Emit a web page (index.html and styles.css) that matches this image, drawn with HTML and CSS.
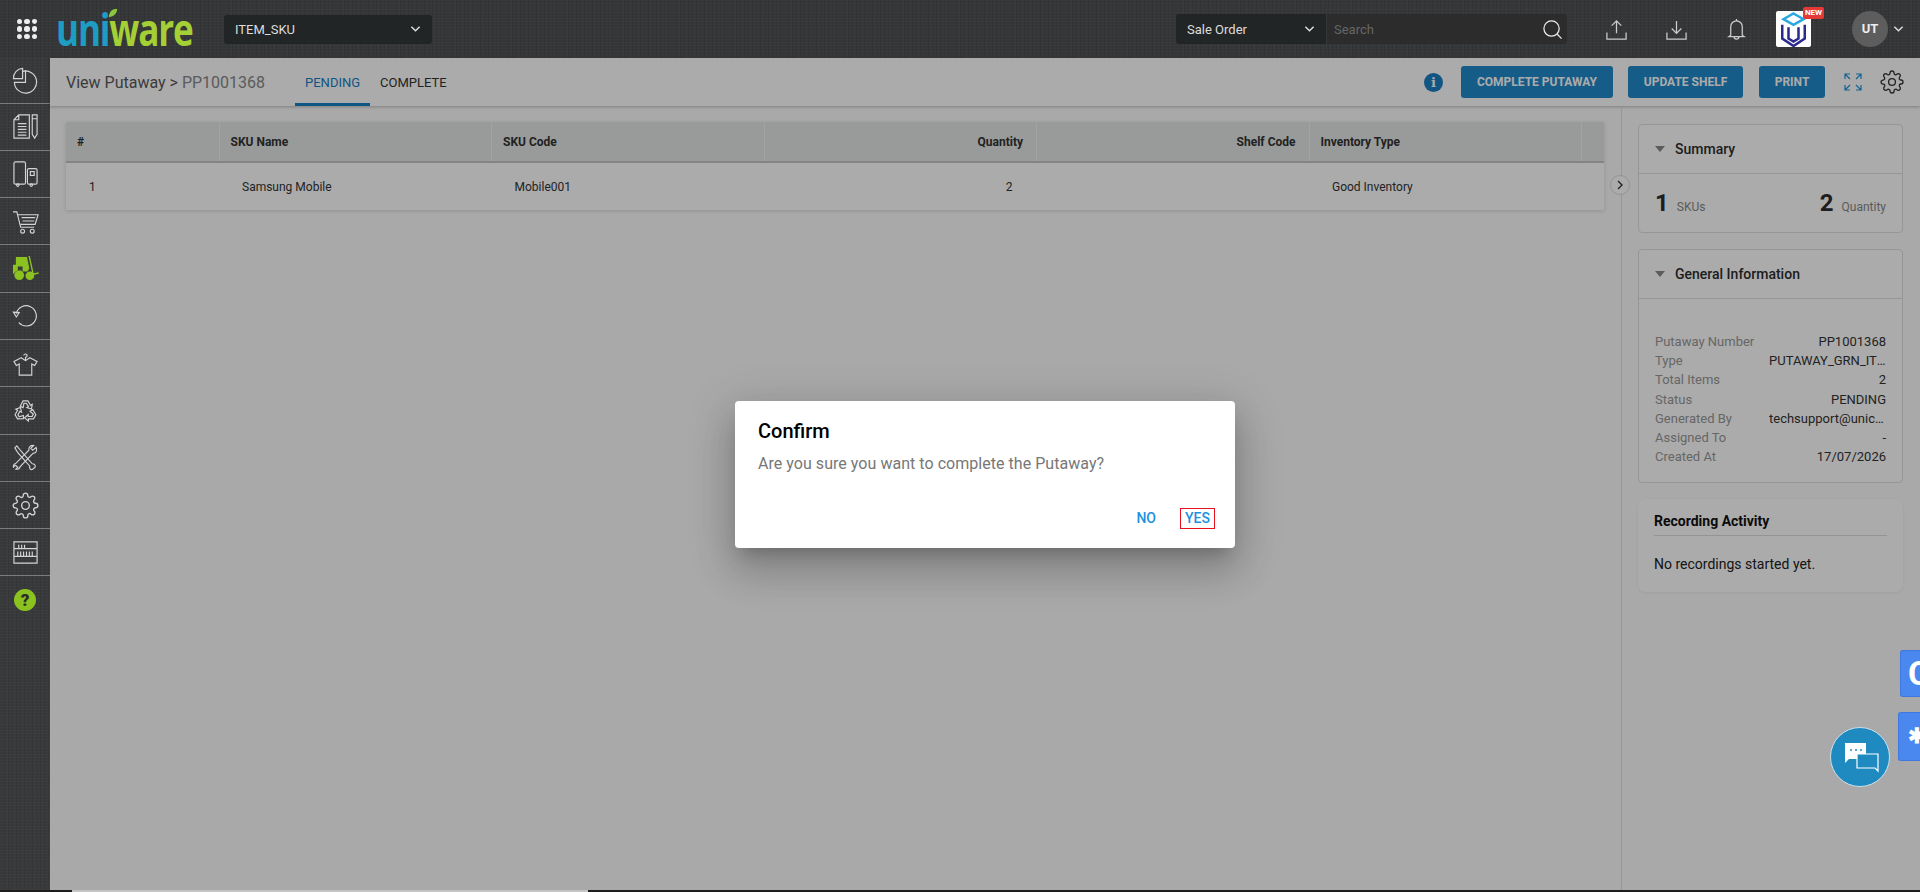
FILE: index.html
```html
<!DOCTYPE html>
<html lang="en">
<head>
    <meta charset="UTF-8">
    <title>View Putaway</title>
    <link rel="stylesheet" href="styles.css">
</head>
<body>
    <svg class="defs" width="0" height="0">
        <symbol id="gear" viewBox="0 0 24 24">
            <circle cx="12" cy="12" r="3.4"></circle>
            <path d="M19.4 15a1.65 1.65 0 0 0 .33 1.82l.06.06a2 2 0 0 1 0 2.83 2 2 0 0 1-2.83 0l-.06-.06a1.65 1.65 0 0 0-1.82-.33 1.65 1.65 0 0 0-1 1.51V21a2 2 0 0 1-2 2 2 2 0 0 1-2-2v-.09A1.65 1.65 0 0 0 9 19.4a1.65 1.65 0 0 0-1.82.33l-.06.06a2 2 0 0 1-2.83 0 2 2 0 0 1 0-2.83l.06-.06a1.65 1.65 0 0 0 .33-1.82 1.65 1.65 0 0 0-1.51-1H3a2 2 0 0 1-2-2 2 2 0 0 1 2-2h.09A1.65 1.65 0 0 0 4.6 9a1.65 1.65 0 0 0-.33-1.82l-.06-.06a2 2 0 0 1 0-2.83 2 2 0 0 1 2.83 0l.06.06a1.65 1.65 0 0 0 1.82.33H9a1.65 1.65 0 0 0 1-1.51V3a2 2 0 0 1 2-2 2 2 0 0 1 2 2v.09a1.65 1.65 0 0 0 1 1.51 1.65 1.65 0 0 0 1.82-.33l.06-.06a2 2 0 0 1 2.83 0 2 2 0 0 1 0 2.83l-.06.06a1.65 1.65 0 0 0-.33 1.82V9a1.65 1.65 0 0 0 1.51 1H21a2 2 0 0 1 2 2 2 2 0 0 1-2 2h-.09a1.65 1.65 0 0 0-1.51 1z"></path>
        </symbol>
        <symbol id="recycle-arrow" viewBox="0 0 28 28">
            <path d="M8.500 9.500 11.500 4h5l2.700 4.500 1.800-1-.8 5-4.800-1.500 1.700-1-2.200-3.500h-2.500L11.500 11z"></path>
        </symbol>
    </svg>

    <header class="topbar">
        <div class="apps-grid">
            <i></i><i></i><i></i><i></i><i></i><i></i><i></i><i></i><i></i>
        </div>
        <div class="logo">
            <div class="logo-word"><span class="logo-uni">uni</span><span class="logo-ware">ware</span></div>
            <svg class="logo-leaf" viewBox="0 0 12 12"><path d="M1 11C1 5 5 1 11 1c0 6-4 9-10 10z"></path></svg>
        </div>
        <div class="facility-select">
            <span>ITEM_SKU</span>
            <svg class="chevron" viewBox="0 0 12 8"><path d="M1.500 1.500 6 6l4.500-4.500"></path></svg>
        </div>
        <div class="search-group">
            <div class="search-type">
                <span>Sale Order</span>
                <svg class="chevron" viewBox="0 0 12 8"><path d="M1.500 1.500 6 6l4.500-4.500"></path></svg>
            </div>
            <div class="search-input">
                <span>Search</span>
                <svg class="search-icon" viewBox="0 0 22 22"><circle cx="10" cy="10" r="8"></circle><path d="m16 16 4.500 4.500"></path></svg>
            </div>
        </div>
        <div class="top-actions">
            <svg class="top-icon" viewBox="0 0 24 24"><path d="M12 16V3M7 8l5-5 5 5M2 15v7h20v-7"></path></svg>
            <svg class="top-icon" viewBox="0 0 24 24"><path d="M12 3v13M7 11l5 5 5-5M2 15v7h20v-7"></path></svg>
            <svg class="top-icon" viewBox="2 0 20 24"><path d="M6 18V9a6 6 0 0 1 12 0v9l2 1.500H4zM9.500 19.500a2.500 2.500 0 0 0 5 0M12 1v2"></path></svg>
        </div>
        <div class="cube-tile">
            <svg viewBox="3 3 28 30"><path class="cube-top" d="M17 5l8 4.500-8 4.500-8-4.500z"></path><path class="cube-body" d="M8 14v11l9 6 9-6V14M13 16v9l4 2.500 4-2.500v-9"></path></svg>
            <span class="new-badge">NEW</span>
        </div>
        <div class="user-menu">
            <span class="avatar">UT</span>
            <svg class="chevron" viewBox="0 0 12 8"><path d="M1.500 1.500 6 6l4.500-4.500"></path></svg>
        </div>
    </header>

    <div class="layout">
        <nav class="sidebar">
            <a class="nav-item">
                <svg viewBox="0 0 28 28"><path d="M11 4.500A11.500 11.500 0 1 1 2.500 16H14V3"></path><path d="M11 1.500A10 10 0 0 0 1.500 12H11z"></path></svg>
            </a>
            <a class="nav-item">
                <svg viewBox="0 0 28 28"><path d="M7 2h11v24H2V7zM7 2v5H2M6 11h9M6 14h9M6 17h9M6 20h9M6 23h9"></path><path d="M21 2h5v20l-2.500 4-2.500-4zM21 6h5"></path></svg>
            </a>
            <a class="nav-item">
                <svg viewBox="0 0 28 28"><rect x="2" y="2" width="12" height="23" rx="1.500"></rect><rect x="16" y="9" width="10" height="16" rx="1.500"></rect><rect x="19" y="12" width="4" height="4"></rect><circle cx="6" cy="26" r="1.300"></circle><circle cx="20" cy="26" r="1.300"></circle></svg>
            </a>
            <a class="nav-item">
                <svg viewBox="0 0 28 28"><path d="M1 4h4l4 16h14M6 7h21l-3 10H9"></path><path d="M10 10h14M11 13.500h12"></path><circle cx="11" cy="24" r="2"></circle><circle cx="21" cy="24" r="2"></circle></svg>
            </a>
            <a class="nav-item">
                <svg class="nav-green" viewBox="0 0 28 28"><path d="M1 10h3V2h11.500L18 14l-2 3H11.500A6 6 0 0 0 2 20l-1-1zM6 12v4h3.500l1.500 1V12z" fill-rule="evenodd"></path><circle cx="7.500" cy="21" r="5"></circle><circle cx="18.500" cy="21.500" r="4.500"></circle><path d="M17 1h1.500l4 18 5-1 .5 1.200-6.500 1.800z"></path></svg>
            </a>
            <a class="nav-item">
                <svg viewBox="0 0 28 28"><path d="M4.500 12A10.500 10.500 0 1 1 7 21.500"></path><path d="M1.500 10.500l6 .5-3 4.500z"></path></svg>
            </a>
            <a class="nav-item">
                <svg viewBox="0 0 28 28"><path d="M9.500 8 2 12l2.500 4 3-1.500V26h13V14.500l3 1.500L26 12l-7.500-4-4.500 3z"></path><path d="M14 11V7.500a1.700 1.700 0 1 0-1.700-1.700"></path></svg>
            </a>
            <a class="nav-item">
                <svg viewBox="0 0 28 28">
                    <use href="#recycle-arrow" width="28" height="28"></use>
                    <use href="#recycle-arrow" width="28" height="28" transform="rotate(120 14 15)"></use>
                    <use href="#recycle-arrow" width="28" height="28" transform="rotate(240 14 15)"></use>
                </svg>
            </a>
            <a class="nav-item">
                <svg viewBox="0 0 28 28"><path d="M3 4l2-2 4 5 12 13.500c2 0 3.500 1.500 3 3.500l-3 2.500c-2 .5-3.500-2-2.500-3.500L6 9z"></path><path d="M25 3.500l-3.500 3-2-2L22.500 1.500c-3-.5-5.500 1.500-5 5L4 20c-2 .5-3 2.500-2.500 4l2-2 2.500 2-2 2c2 .5 4-.5 4.500-2.500L22 9.500c3 .5 4.500-3 3-6z"></path></svg>
            </a>
            <a class="nav-item">
                <svg viewBox="0 0 24 24"><use href="#gear"></use></svg>
            </a>
            <a class="nav-item">
                <svg viewBox="0 0 28 28"><path d="M2 3h24v22H2zM2 10h24M2 18h24M7 6v4M10 6v4M13 6v4M6 13v5M9 13v5M12 13v5M15 13v5M18 13v5M21 13v5"></path></svg>
            </a>
            <a class="nav-item nav-last"><span class="help-icon">?</span></a>
        </nav>

        <main class="main">
            <div class="subheader">
                <h1 class="page-title">View Putaway &gt; <span>PP1001368</span></h1>
                <div class="tabs">
                    <a class="tab tab-active">PENDING</a>
                    <a class="tab">COMPLETE</a>
                </div>
                <div class="subheader-actions">
                    <span class="info-icon">i</span>
                    <button class="action-btn btn-complete">COMPLETE PUTAWAY</button>
                    <button class="action-btn btn-shelf">UPDATE SHELF</button>
                    <button class="action-btn btn-print">PRINT</button>
                    <svg class="expand-icon" viewBox="0 0 18 18"><path d="M1 6V1h5M1 1l5 5M12 1h5v5M17 1l-5 5M1 12v5h5M1 17l5-5M17 12v5h-5M17 17l-5-5"></path></svg>
                    <svg class="settings-icon" viewBox="0 0 24 24"><use href="#gear"></use></svg>
                </div>
            </div>

            <div class="content">
                <section class="table-area">
                    <table class="items-table">
                        <colgroup>
                            <col class="col-num">
                            <col class="col-wide">
                            <col class="col-wide">
                            <col class="col-wide">
                            <col class="col-wide">
                            <col class="col-wide">
                            <col class="col-end">
                        </colgroup>
                        <thead>
                            <tr>
                                <th>#</th>
                                <th>SKU Name</th>
                                <th>SKU Code</th>
                                <th class="right">Quantity</th>
                                <th class="right">Shelf Code</th>
                                <th>Inventory Type</th>
                                <th></th>
                            </tr>
                        </thead>
                        <tbody>
                            <tr>
                                <td>1</td>
                                <td>Samsung Mobile</td>
                                <td>Mobile001</td>
                                <td class="right">2</td>
                                <td class="right"></td>
                                <td>Good Inventory</td>
                                <td></td>
                            </tr>
                        </tbody>
                    </table>
                </section>

                <aside class="side-panel">
                    <button class="collapse-btn">
                        <svg viewBox="0 0 8 12"><path d="M2 2l4 4-4 4"></path></svg>
                    </button>
                    <div class="card">
                        <div class="card-head summary-head"><i class="caret"></i>Summary</div>
                        <div class="summary-body">
                            <div class="stat"><b>1</b><span>SKUs</span></div>
                            <div class="stat"><b>2</b><span>Quantity</span></div>
                        </div>
                    </div>
                    <div class="card">
                        <div class="card-head"><i class="caret"></i>General Information</div>
                        <dl class="info-list">
                            <dt>Putaway Number</dt><dd>PP1001368</dd>
                            <dt>Type</dt><dd><span class="clip">PUTAWAY_GRN_ITEM_SKU</span></dd>
                            <dt>Total Items</dt><dd>2</dd>
                            <dt>Status</dt><dd>PENDING</dd>
                            <dt>Generated By</dt><dd><span class="clip">techsupport@unicommerce.com</span></dd>
                            <dt>Assigned To</dt><dd>-</dd>
                            <dt>Created At</dt><dd>17/07/2026</dd>
                        </dl>
                    </div>
                    <div class="recording-card">
                        <h3>Recording Activity</h3>
                        <p>No recordings started yet.</p>
                    </div>
                </aside>
            </div>

            <div class="overlay">
                <div class="dialog">
                    <h2>Confirm</h2>
                    <p>Are you sure you want to complete the Putaway?</p>
                    <div class="dialog-actions">
                        <button class="dialog-btn">NO</button>
                        <button class="dialog-btn dialog-focus">YES</button>
                    </div>
                </div>
            </div>

            <div class="float-tab float-tab-one">C</div>
            <div class="float-tab float-tab-two">✱</div>
            <div class="chat-bubble">
                <svg viewBox="0 0 36 36"><path class="chat-solid" d="M2 3h21v16H6l-4 4z"></path><path class="chat-line" d="M14 14h21v17l-3-3H14z"></path><circle class="chat-dot" cx="8" cy="10" r="1"></circle><circle class="chat-dot" cx="13" cy="10" r="1"></circle><circle class="chat-dot" cx="18" cy="10" r="1"></circle></svg>
            </div>
        </main>
    </div>

    <div class="page-scroll"><div class="page-thumb"></div></div>
</body>
</html>
```

FILE: styles.css
```css
* {
    box-sizing: border-box;
}

body {
    margin: 0;
    height: 892px;
    overflow: hidden;
    display: flex;
    flex-direction: column;
    font-family: Roboto, "Liberation Sans", sans-serif;
    font-size: 12px;
    color: #333;
    background: #fff;
}

.defs {
    position: absolute;
}

/* top bar */
.topbar {
    height: 58px;
    flex: none;
    display: flex;
    align-items: center;
    padding-left: 17px;
    color: #ddd;
    background-color: #353637;
    background-image:
        repeating-linear-gradient(0deg, rgba(255,255,255,0.018) 0 1px, transparent 1px 3px),
        repeating-linear-gradient(90deg, rgba(0,0,0,0.07) 0 1px, transparent 1px 4px),
        repeating-linear-gradient(90deg, rgba(255,255,255,0.015) 0 1px, transparent 1px 7px);
}

.apps-grid {
    width: 20px;
    height: 20px;
    display: grid;
    grid-template-columns: repeat(3, 1fr);
    gap: 2px;
}

.apps-grid i {
    background: #eee;
    border-radius: 50%;
}

.logo {
    position: relative;
    width: 146px;
    margin-left: 19px;
}

.logo-word {
    font-family: "Open Sans", sans-serif;
    font-size: 45px;
    font-weight: 700;
    line-height: 40px;
    letter-spacing: -1.5px;
    white-space: nowrap;
    transform: scaleX(0.78);
    transform-origin: left center;
}

.logo-uni {
    color: #1f9cc2;
}

.logo-ware {
    color: #a4cf35;
}

.logo-leaf {
    position: absolute;
    left: 52px;
    top: -1px;
    width: 10px;
    height: 10px;
    fill: #8cc63f;
}

.facility-select {
    width: 208px;
    height: 29px;
    margin-left: 22px;
    padding: 0 11px;
    display: flex;
    align-items: center;
    justify-content: space-between;
    background: #222526;
    border-radius: 3px;
    font-size: 13px;
}

.chevron {
    width: 11px;
    height: 8px;
    fill: none;
    stroke: #ddd;
    stroke-width: 1.6;
}

.search-group {
    margin-left: 744px;
    display: flex;
    height: 30px;
}

.search-type {
    width: 150px;
    padding: 0 11px;
    display: flex;
    align-items: center;
    justify-content: space-between;
    background: #222526;
    border-radius: 3px 0 0 3px;
    font-size: 13px;
}

.search-input {
    width: 240px;
    margin-left: 1px;
    padding: 0 1px 0 7px;
    display: flex;
    align-items: center;
    justify-content: space-between;
    background: #2c2c2c;
    border-radius: 0 3px 3px 0;
    font-size: 13px;
    color: #666;
}

.search-icon {
    width: 21px;
    height: 21px;
    margin-right: 3px;
    fill: none;
    stroke: #eee;
    stroke-width: 1.3;
}

.top-actions {
    margin-left: 38px;
    display: flex;
    gap: 37px;
}

.top-icon {
    width: 23px;
    height: 23px;
    fill: none;
    stroke: #ccc;
    stroke-width: 1.3;
}

.cube-tile {
    position: relative;
    width: 35px;
    height: 36px;
    margin-left: 28px;
    background: #fff;
    border-radius: 2px;
}

.cube-tile svg {
    display: block;
    fill: none;
    stroke-width: 2;
}

.cube-top {
    stroke: #29a9e0;
}

.cube-body {
    stroke: #2a2a8f;
}

.new-badge {
    position: absolute;
    top: -4px;
    right: -13px;
    width: 21px;
    height: 12px;
    background: #e53935;
    border-radius: 2px;
    color: #fff;
    font-size: 8px;
    font-weight: 700;
    line-height: 12px;
    text-align: center;
}

.user-menu {
    margin-left: 41px;
    display: flex;
    align-items: center;
    gap: 5px;
}

.avatar {
    width: 36px;
    height: 36px;
    border-radius: 50%;
    background: #5d5d5d;
    color: #eee;
    font-size: 13px;
    font-weight: 700;
    line-height: 36px;
    text-align: center;
}

/* layout */
.layout {
    flex: 1;
    min-height: 0;
    display: flex;
}

.sidebar {
    width: 50px;
    flex: none;
    background-color: #38393b;
    background-image:
        repeating-linear-gradient(0deg, rgba(255,255,255,0.018) 0 1px, transparent 1px 3px),
        repeating-linear-gradient(90deg, rgba(0,0,0,0.07) 0 1px, transparent 1px 4px),
        repeating-linear-gradient(90deg, rgba(255,255,255,0.015) 0 1px, transparent 1px 7px);
}

.nav-item {
    height: 47.3px;
    display: flex;
    align-items: center;
    justify-content: center;
    border-bottom: 1px solid #7b7b7b;
}

.nav-item:first-child {
    height: 45.5px;
}

.nav-last {
    border-bottom: none;
}

.nav-item svg {
    width: 27px;
    height: 27px;
    fill: none;
    stroke: #d4d4d4;
    stroke-width: 1.2;
}

.nav-item svg.nav-green {
    fill: #8cc220;
    stroke: none;
}

.help-icon {
    width: 22px;
    height: 22px;
    border-radius: 50%;
    background: #8cc220;
    color: #2d2d2d;
    font-size: 17px;
    font-weight: 900;
    line-height: 22px;
    text-align: center;
}

.main {
    position: relative;
    flex: 1;
    min-width: 0;
    display: flex;
    flex-direction: column;
    background: #fcfcfc;
}

/* sub header */
.subheader {
    height: 48px;
    flex: none;
    display: flex;
    align-items: center;
    padding-left: 16px;
    background: #fff;
    box-shadow: 0 1px 3px rgba(0,0,0,0.25);
}

.page-title {
    margin: 0;
    font-size: 16px;
    font-weight: 400;
    color: #5a5a5a;
}

.page-title span {
    color: #888;
}

.tabs {
    height: 48px;
    margin-left: 30px;
    display: flex;
}

.tab {
    height: 48px;
    padding: 0 10px;
    border-bottom: 3px solid transparent;
    font-size: 13px;
    line-height: 49px;
    color: #333;
}

.tab-active {
    color: #1680c4;
    border-bottom-color: #1680c4;
}

.subheader-actions {
    margin-left: auto;
    display: flex;
    align-items: center;
}

.info-icon {
    width: 19px;
    height: 19px;
    border-radius: 50%;
    background: #1a7fc4;
    color: #fff;
    font-family: "DejaVu Serif", serif;
    font-size: 13px;
    font-weight: 700;
    line-height: 19px;
    text-align: center;
}

.action-btn {
    height: 32px;
    padding: 0;
    border: none;
    border-radius: 3px;
    background: #2189cb;
    color: #fff;
    font-family: inherit;
    font-size: 12px;
    font-weight: 700;
}

.btn-complete {
    width: 152px;
    margin-left: 18px;
}

.btn-shelf {
    width: 115px;
    margin-left: 15px;
}

.btn-print {
    width: 66px;
    margin-left: 16px;
}

.expand-icon {
    width: 18px;
    height: 18px;
    margin-left: 19px;
    fill: none;
    stroke: #1f93d8;
    stroke-width: 1.2;
}

.settings-icon {
    width: 24px;
    height: 24px;
    margin: 0 16px 0 18px;
    fill: none;
    stroke: #333;
    stroke-width: 1.3;
}

/* table */
.content {
    flex: 1;
    min-height: 0;
    display: flex;
}

.table-area {
    width: 1571px;
    flex: none;
    padding: 16px 17px 0 16px;
}

.items-table {
    width: 1538px;
    table-layout: fixed;
    border-collapse: collapse;
    background: #fff;
    box-shadow: 0 1px 4px rgba(0,0,0,0.15);
}

.col-num {
    width: 153px;
}

.col-wide {
    width: 272.5px;
}

.col-end {
    width: 22.5px;
}

.items-table th {
    height: 40px;
    padding: 0 13px 0 11px;
    background: #e4e7e6;
    border-right: 1px solid #f2f4f3;
    border-bottom: 2px solid #c4c7c6;
    font-size: 12px;
    font-weight: 700;
    text-align: left;
}

.items-table th:last-child {
    border-right: none;
}

.items-table td {
    height: 48px;
    padding: 0 24px 0 23px;
    font-size: 12px;
}

.items-table .right {
    text-align: right;
}

/* right panel */
.side-panel {
    position: relative;
    flex: 1;
    padding: 18px 17px 0 16px;
    border-left: 1px solid #e0e0e0;
}

.collapse-btn {
    position: absolute;
    left: -12px;
    top: 69px;
    width: 20px;
    height: 20px;
    padding: 0;
    background: #fff;
    border: 1px solid #ddd;
    border-radius: 50%;
    display: flex;
    align-items: center;
    justify-content: center;
}

.collapse-btn svg {
    width: 8px;
    height: 12px;
    fill: none;
    stroke: #333;
    stroke-width: 1.4;
}

.card {
    margin-bottom: 16px;
    background: #fff;
    border: 1px solid #e0e0e0;
    border-radius: 4px;
}

.card-head {
    height: 49px;
    padding-left: 16px;
    display: flex;
    align-items: center;
    border-bottom: 1px solid #dedede;
    font-size: 14px;
    font-weight: 500;
    color: #2d2d2d;
}

.caret {
    width: 0;
    height: 0;
    margin-right: 10px;
    border-left: 5.5px solid transparent;
    border-right: 5.5px solid transparent;
    border-top: 6px solid #888;
}

.summary-body {
    height: 58px;
    padding: 0 16px;
    display: flex;
    align-items: center;
    justify-content: space-between;
}

.stat b {
    font-size: 24px;
    font-weight: 700;
    margin-right: 8px;
    color: #2d2d2d;
}

.stat span {
    color: #888;
}

.info-list {
    margin: 0;
    padding: 33px 16px 16px;
    display: grid;
    grid-template-columns: auto auto;
    grid-auto-rows: 19.17px;
    align-items: center;
    font-size: 13px;
}

.info-list dt {
    color: #999;
}

.info-list dd {
    margin: 0;
    text-align: right;
    color: #333;
}

.clip {
    display: inline-block;
    width: 117px;
    overflow: hidden;
    white-space: nowrap;
    text-overflow: ellipsis;
    text-align: left;
    vertical-align: bottom;
}

.recording-card {
    height: 93px;
    padding: 14px 16px;
    background: #fff;
    border-radius: 8px;
    box-shadow: 0 1px 3px rgba(0,0,0,0.06);
}

.recording-card h3 {
    margin: 0;
    padding-bottom: 6px;
    border-bottom: 1px solid #ddd;
    font-size: 14px;
    font-weight: 700;
    color: #111;
}

.recording-card p {
    margin: 20px 0 0;
    font-size: 14px;
    color: #222;
}

/* confirm dialog */
.overlay {
    position: absolute;
    inset: 0;
    z-index: 10;
    display: flex;
    align-items: center;
    justify-content: center;
    background: rgba(0,0,0,0.33);
}

.dialog {
    width: 500px;
    height: 147px;
    padding: 18px 20px 0 23px;
    background: #fff;
    border-radius: 4px;
    box-shadow: 0 11px 15px -7px rgba(0,0,0,0.2), 0 24px 38px 3px rgba(0,0,0,0.14), 0 9px 46px 8px rgba(0,0,0,0.12);
}

.dialog h2 {
    margin: 0;
    font-size: 20px;
    font-weight: 500;
    line-height: 24px;
    color: #000;
}

.dialog p {
    margin: 9px 0 0;
    font-size: 16px;
    line-height: 24px;
    letter-spacing: 0.04px;
    color: #777;
}

.dialog-actions {
    margin-top: 32px;
    display: flex;
    justify-content: flex-end;
    align-items: center;
    gap: 24px;
}

.dialog-btn {
    height: 21px;
    padding: 0;
    background: none;
    border: none;
    color: #1e90e0;
    font-family: inherit;
    font-size: 14px;
    font-weight: 500;
}

.dialog-focus {
    width: 35px;
    border: 1px solid #e8121e;
}

/* floating widgets, these stay above the overlay */
.float-tab {
    position: absolute;
    z-index: 20;
    overflow: hidden;
    background: #4a87ee;
    border: 1px solid #3f78de;
    border-right: none;
    border-radius: 3px 0 0 3px;
    color: #fff;
    font-weight: 700;
}

.float-tab-one {
    top: 592px;
    left: 1850px;
    width: 20px;
    height: 47px;
    padding-left: 7px;
    font-size: 34px;
    line-height: 44px;
}

.float-tab-two {
    top: 654px;
    left: 1848px;
    width: 22px;
    height: 49px;
    padding-left: 9px;
    font-size: 21px;
    line-height: 46px;
}

.chat-bubble {
    position: absolute;
    z-index: 20;
    top: 669px;
    left: 1780px;
    width: 60px;
    height: 60px;
    padding: 12px;
    border-radius: 50%;
    background: #1f8ac0;
    border: 1px solid #cfe0ea;
}

.chat-bubble svg {
    display: block;
    width: 36px;
    height: 36px;
}

.chat-solid {
    fill: #fff;
}

.chat-line {
    fill: #1f8ac0;
    stroke: #fff;
    stroke-width: 1.2;
}

.chat-dot {
    fill: #1f8ac0;
}

/* page scrollbar strip */
.page-scroll {
    height: 2px;
    flex: none;
    background: #1d1d1d;
}

.page-thumb {
    width: 516px;
    height: 2px;
    margin-left: 72px;
    background: #c4c4c4;
}
```
